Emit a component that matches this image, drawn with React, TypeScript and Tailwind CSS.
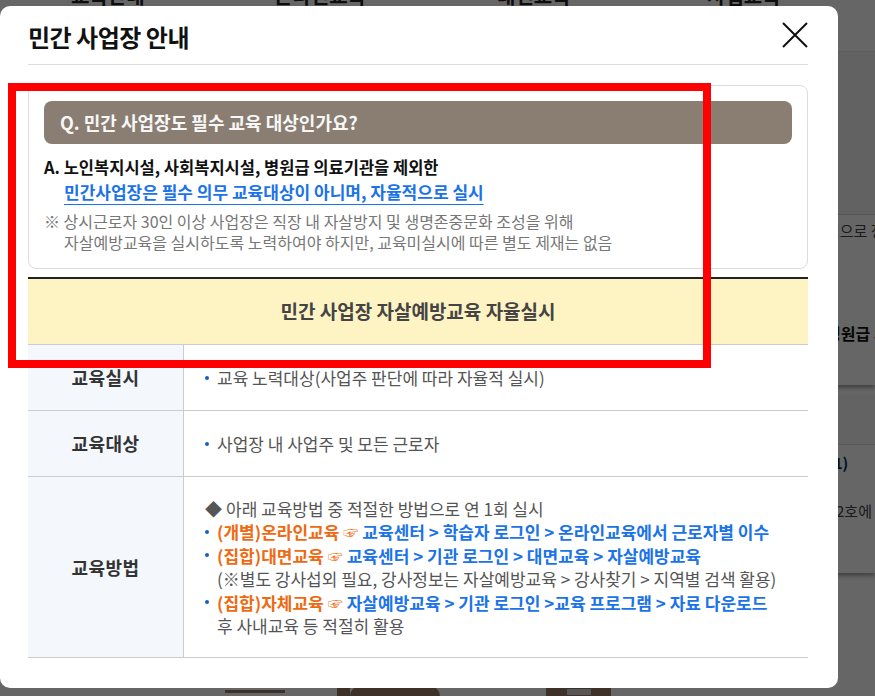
const Dot = () => <span className="mr-[8px] inline-block h-[4px] w-[4px] shrink-0 rounded-full bg-[#1b5fb8]" />;

const Route = ({ tag, path }: { tag: string; path: string }) => (
  <div className="flex items-center whitespace-nowrap font-bold">
    <Dot />
    <span className="text-[#ee6a12]">{tag}</span>
    <span className="mx-[4px] text-[15px] text-[#ee6a12]">☞</span>
    <span className="text-[#1a73e8]">{path}</span>
  </div>
);

const BackgroundPage = () => {
  return (
    <div className="flex h-[696px] flex-col bg-white text-[#222]">
      {/* header nav, scrolled mostly out of view */}
      <div className="h-[52px] shrink-0 overflow-hidden border-b border-[#e6e6e6]">
        <div className="-mt-[14px] flex pl-[71px] text-[20px] font-bold leading-[20px]">
          <span className="w-[203px]">교육안내</span>
          <span className="w-[223px]">온라인교육</span>
          <span className="w-[210px]">대면교육</span>
          <span>사업교육</span>
        </div>
      </div>
      <div className="h-[163px] shrink-0 border-b border-[#d8d8d8] bg-[#f6f6f6]" />
      <div className="h-[170px] shrink-0 whitespace-nowrap bg-white pl-[826px] shadow-[0_3px_4px_rgba(0,0,0,0.35)]">
        <p className="mt-[5px] text-[15px] text-[#444]">적으로 정하여</p>
        <p className="mt-[78px] text-[16px] font-bold text-[#111]">병원급 의료기관</p>
      </div>
      <div className="h-[10px] shrink-0" />
      <div className="h-[178px] shrink-0 whitespace-nowrap bg-white shadow-[0_3px_4px_rgba(0,0,0,0.35)]">
        <div className="h-[50px] border-b border-[#dcdcdc] bg-[#f8f8f8]" />
        <p className="mt-[7px] pl-[828px] text-[15px] font-bold text-[#0b2a5a]">(1)</p>
        <p className="mt-[25px] pl-[836px] text-[15px] text-[#444]">2호에 따른</p>
      </div>
      <div className="mt-[113px] flex items-start gap-0 pl-[225px]">
        <div className="mt-[4px] h-[3px] w-[60px] bg-[#9c7c68]" />
        <div className="ml-[52px] h-[10px] w-[13px] bg-[#9c7c68]" />
        <div className="h-[10px] w-[90px] rounded-t-[40px] bg-[#9c7c68]" />
        <div className="ml-[106px] flex h-[10px] w-[65px] justify-center bg-[#9c7c68] pt-[3px]">
          <div className="h-[6px] w-[24px] bg-[#d9d9d9]" />
        </div>
      </div>
    </div>
  );
};

const App = () => {
  return (
    <div className="relative h-[696px] w-full overflow-hidden font-['Noto_Sans_CJK_KR','Noto_Sans',sans-serif]">
      <BackgroundPage />
      <div className="absolute inset-0 bg-black/60" />

      {/* modal */}
      <div className="absolute left-0 top-[6px] h-[682px] w-[838px] rounded-[10px] bg-white pl-[28px] pr-[30px]">
        <div className="flex h-[59px] items-center justify-between border-b border-[#dddddd] pt-[4px]">
          <h2 className="text-[24px] font-bold tracking-[-0.5px] text-[#111]">민간 사업장 안내</h2>
          <button className="-mt-[4px] text-[#111]" aria-label="닫기">
            <svg width="26" height="26" viewBox="0 0 26 26" fill="none" stroke="currentColor" strokeWidth="2">
              <path d="M1 1L25 25M25 1L1 25" />
            </svg>
          </button>
        </div>

        {/* Q&A box */}
        <div className="mt-[20px] rounded-[8px] border border-[#dcdcdc] p-[15px]">
          <div className="flex h-[43px] items-center rounded-[8px] bg-[#8a7e72] pl-[16px] text-[18px] font-bold text-[#f7f7f7]">
            Q. 민간 사업장도 필수 교육 대상인가요?
          </div>
          <p className="mt-[11px] text-[16.5px] font-bold leading-[24px] text-[#111]">
            A. 노인복지시설, 사회복지시설, 병원급 의료기관을 제외한
          </p>
          <p className="pl-[20px] text-[17px] font-bold leading-[26px] text-[#1a73e8] underline decoration-1 underline-offset-[5px]">
            민간사업장은 필수 의무 교육대상이 아니며, 자율적으로 실시
          </p>
          <div className="mt-[6px] text-[16px] leading-[21px] text-[#777]">
            <p>※ 상시근로자 30인 이상 사업장은 직장 내 자살방지 및 생명존중문화 조성을 위해</p>
            <p className="pl-[20px]">자살예방교육을 실시하도록 노력하여야 하지만, 교육미실시에 따른 별도 제재는 없음</p>
          </div>
        </div>

        {/* table */}
        <div className="mt-[8px] border-t-2 border-[#222]">
          <div className="flex h-[66px] items-center justify-center border-b border-[#cccccc] bg-[#fef3c3] text-[19px] font-bold text-[#444]">
            민간 사업장 자살예방교육 자율실시
          </div>
          <div className="grid grid-cols-[156px_1fr] text-[17px] text-[#555]">
            <div className="flex h-[66px] items-center justify-center border-b border-r border-[#cccccc] bg-[#f4f8fc] text-[18px] font-bold tracking-[0.5px] text-[#333]">
              교육실시
            </div>
            <div className="flex h-[66px] items-center border-b border-[#cccccc] pl-[21px]">
              <Dot />
              교육 노력대상(사업주 판단에 따라 자율적 실시)
            </div>

            <div className="flex h-[66px] items-center justify-center border-b border-r border-[#cccccc] bg-[#f4f8fc] text-[18px] font-bold tracking-[0.5px] text-[#333]">
              교육대상
            </div>
            <div className="flex h-[66px] items-center border-b border-[#cccccc] pl-[21px]">
              <Dot />
              사업장 내 사업주 및 모든 근로자
            </div>

            <div className="flex h-[181px] items-center justify-center border-b border-r border-[#cccccc] bg-[#f4f8fc] text-[18px] font-bold tracking-[0.5px] text-[#333]">
              교육방법
            </div>
            <div className="flex h-[181px] flex-col justify-center border-b border-[#cccccc] pl-[21px] leading-[23.5px]">
              <div className="whitespace-nowrap">
                <span className="mr-[4px] text-[#555]">◆</span>아래 교육방법 중 적절한 방법으로 연 1회 실시
              </div>
              <Route tag="(개별)온라인교육" path="교육센터 > 학습자 로그인 > 온라인교육에서 근로자별 이수" />
              <Route tag="(집합)대면교육" path="교육센터 > 기관 로그인 > 대면교육 > 자살예방교육" />
              <div className="whitespace-nowrap pl-[12px]">(※별도 강사섭외 필요, 강사정보는 자살예방교육 &gt; 강사찾기 &gt; 지역별 검색 활용)</div>
              <Route tag="(집합)자체교육" path="자살예방교육 > 기관 로그인 >교육 프로그램 > 자료 다운로드" />
              <div className="whitespace-nowrap pl-[12px]">후 사내교육 등 적절히 활용</div>
            </div>
          </div>
        </div>
      </div>

      {/* red highlight annotation */}
      <div className="pointer-events-none absolute left-[8px] top-[83px] h-[285px] w-[703px] border-[8px] border-[#ff0000]" />
    </div>
  );
};

export default App;
